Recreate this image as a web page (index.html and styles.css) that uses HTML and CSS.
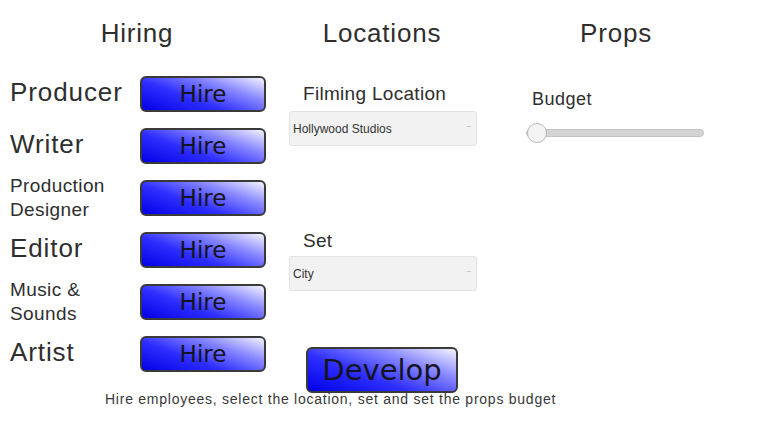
FILE: index.html
```html
<!DOCTYPE html>
<html lang="en">
<head>
    <meta charset="UTF-8">
    <meta name="viewport" content="width=device-width, initial-scale=1.0">
    <title>Movie Studio</title>
    <link rel="stylesheet" href="styles.css">
</head>
<body>
    <div class="board">
        <!-- Hiring -->
        <div class="column hiring">
            <h2>Hiring</h2>
            <div class="hire-row">
                <span class="role">Producer</span>
                <button type="button" class="btn hire">Hire</button>
            </div>
            <div class="hire-row">
                <span class="role">Writer</span>
                <button type="button" class="btn hire">Hire</button>
            </div>
            <div class="hire-row">
                <span class="role small">Production<br>Designer</span>
                <button type="button" class="btn hire">Hire</button>
            </div>
            <div class="hire-row">
                <span class="role">Editor</span>
                <button type="button" class="btn hire">Hire</button>
            </div>
            <div class="hire-row">
                <span class="role small">Music &amp;<br>Sounds</span>
                <button type="button" class="btn hire">Hire</button>
            </div>
            <div class="hire-row">
                <span class="role">Artist</span>
                <button type="button" class="btn hire">Hire</button>
            </div>
        </div>

        <!-- Locations -->
        <div class="column locations">
            <h2>Locations</h2>
            <div class="loc-body">
                <label class="field-label" for="location">Filming Location</label>
                <div class="picker-wrap">
                    <select id="location" class="picker">
                        <option>Hollywood Studios</option>
                    </select>
                </div>
                <label class="field-label set-label" for="set">Set</label>
                <div class="picker-wrap">
                    <select id="set" class="picker">
                        <option>City</option>
                    </select>
                </div>
                <button type="button" class="btn develop">Develop</button>
            </div>
        </div>

        <!-- Props -->
        <div class="column props">
            <h2>Props</h2>
            <div class="props-body">
                <label class="budget-label" for="budget">Budget</label>
                <input type="range" id="budget" class="budget" min="0" max="100" value="0">
            </div>
        </div>
    </div>
    <p class="hint">Hire employees, select the location, set and set the props budget</p>
</body>
</html>
```

FILE: styles.css
```css
body {
    font-family: "Liberation Sans", Arial, sans-serif;
    margin: 0;
    padding: 0;
    background-color: #fff;
    color: #2e2e2e;
}
.board {
    display: grid;
    grid-template-columns: 274px 216px 252px;
}
.column {
    display: flex;
    flex-direction: column;
}
h2 {
    font-weight: normal;
    font-size: 26px;
    line-height: 30px;
    letter-spacing: 0.8px;
    margin: 18px 0 0;
    text-align: center;
}
.hiring h2 {
    margin-bottom: 22px;
}
.hire-row {
    display: flex;
    align-items: center;
    height: 52px;
    padding-left: 10px;
}
.role {
    width: 130px;
    font-size: 26px;
    line-height: 28px;
    letter-spacing: 0.9px;
    margin-top: -8px;
}
.role.small {
    font-size: 19px;
    line-height: 24px;
    letter-spacing: 0.4px;
    margin-top: -4px;
}
.btn {
    font-family: "DejaVu Sans", Verdana, sans-serif;
    color: #14141e;
    border: 2px solid #3a3a3a;
    border-radius: 6px;
    background: linear-gradient(200deg, #f4f4ff 0%, #8a8aff 30%, #2e2eff 62%, #0000e6 100%);
    padding: 0;
    cursor: pointer;
}
.hire {
    width: 126px;
    height: 36px;
    font-size: 23px;
    margin-top: -4px;
}
.loc-body {
    display: flex;
    flex-direction: column;
    padding-left: 15px;
    margin-top: 35px;
}
.field-label {
    font-size: 19px;
    line-height: 22px;
    letter-spacing: 0.3px;
    padding-left: 14px;
    margin-bottom: 6px;
}
.set-label {
    margin-top: 84px;
    margin-bottom: 4px;
}
.picker-wrap {
    position: relative;
    width: 188px;
}
.picker-wrap::after {
    content: "\2013";
    position: absolute;
    right: 6px;
    top: 10px;
    font-size: 8px;
    color: #aaa;
}
.picker {
    -webkit-appearance: none;
    appearance: none;
    width: 188px;
    height: 35px;
    font-family: "Liberation Sans", Arial, sans-serif;
    font-size: 12px;
    color: #333;
    background-color: #f2f2f2;
    border: 1px solid #e2e2e2;
    border-radius: 3px;
    padding: 0 3px;
}
.develop {
    width: 152px;
    height: 46px;
    font-size: 29px;
    margin: 56px 0 0 17px;
}
.props-body {
    display: flex;
    flex-direction: column;
    padding-left: 36px;
}
.budget-label {
    font-size: 18px;
    line-height: 22px;
    letter-spacing: 0.5px;
    margin: 40px 0 0 6px;
}
.budget {
    -webkit-appearance: none;
    appearance: none;
    width: 178px;
    height: 22px;
    margin: 12px 0 0 0;
    background: transparent;
}
.budget::-webkit-slider-runnable-track {
    height: 8px;
    background-color: #d4d4d4;
    border: 1px solid #c2c2c2;
    border-radius: 5px;
}
.budget::-webkit-slider-thumb {
    -webkit-appearance: none;
    width: 20px;
    height: 20px;
    margin-top: -7px;
    border-radius: 50%;
    background-color: #f4f4f4;
    border: 1px solid #b8b8b8;
}
.hint {
    margin: -2px 0 0;
    padding-left: 105px;
    font-size: 14px;
    letter-spacing: 0.75px;
    color: #383838;
}
```
